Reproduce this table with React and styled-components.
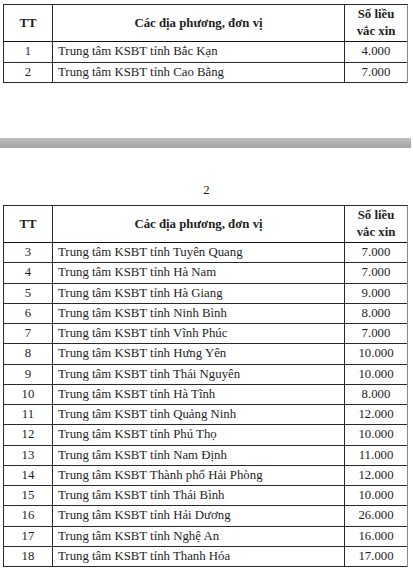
import React from "react";
import styled, { createGlobalStyle } from "styled-components";

const Global = createGlobalStyle`
  html, body { margin: 0; padding: 0; background: #fff; }
  body { font-family: "Liberation Serif", "Times New Roman", serif; color: #1e1e1e; }
`;

const Page = styled.div`
  display: flex;
  flex-direction: column;
  padding-top: 4px;
`;

const Table = styled.div`
  margin-left: 3px;
  width: 405px;
  box-sizing: border-box;
  border: 1px solid #2a2a2a;
  border-right-color: #8a8a8a;
  border-bottom: none;
`;

const Row = styled.div`
  display: grid;
  grid-template-columns: 49px 292px 62px;
  height: ${(p) => p.$h}px;
  border-bottom: 1px solid ${(p) => (p.$head ? "#111" : "#2a2a2a")};
  box-sizing: border-box;
`;

const Cell = styled.div`
  display: flex;
  align-items: center;
  justify-content: ${(p) => (p.$left ? "flex-start" : "center")};
  padding-left: ${(p) => (p.$left ? "5px" : "0")};
  border-right: ${(p) => (p.$last ? "none" : "1px solid #2a2a2a")};
  box-sizing: border-box;
  font-size: 12.8px;
  font-weight: ${(p) => (p.$bold ? 700 : 400)};
  line-height: 17px;
  text-align: center;
  white-space: nowrap;
`;

const Bar = styled.div`
  margin-top: 55px;
  width: 411px;
  height: 10px;
  background: linear-gradient(#bdbdbd, #a3a3a3);
`;

const PageNum = styled.div`
  margin-top: 34px;
  width: 413px;
  text-align: center;
  font-size: 12.8px;
  line-height: 16px;
  height: 16px;
`;

const Spacer = styled.div`
  height: ${(p) => p.$h}px;
`;

function Header() {
  return (
    <Row $h={37} $head>
      <Cell $bold>TT</Cell>
      <Cell $bold>Các địa phương, đơn vị</Cell>
      <Cell $bold $last>
        Số liều
        <br />
        vắc xin
      </Cell>
    </Row>
  );
}

function DataTable({ rows, h }) {
  return (
    <Table>
      <Header />
      {rows.map(([n, name, v]) => (
        <Row key={n} $h={h}>
          <Cell>{n}</Cell>
          <Cell $left>{name}</Cell>
          <Cell $last>{v}</Cell>
        </Row>
      ))}
    </Table>
  );
}

const rows1 = [
  [1, "Trung tâm KSBT tỉnh Bắc Kạn", "4.000"],
  [2, "Trung tâm KSBT tỉnh Cao Bằng", "7.000"],
];

const rows2 = [
  [3, "Trung tâm KSBT tỉnh Tuyên Quang", "7.000"],
  [4, "Trung tâm KSBT tỉnh Hà Nam", "7.000"],
  [5, "Trung tâm KSBT tỉnh Hà Giang", "9.000"],
  [6, "Trung tâm KSBT tỉnh Ninh Bình", "8.000"],
  [7, "Trung tâm KSBT tỉnh Vĩnh Phúc", "7.000"],
  [8, "Trung tâm KSBT tỉnh Hưng Yên", "10.000"],
  [9, "Trung tâm KSBT tỉnh Thái Nguyên", "10.000"],
  [10, "Trung tâm KSBT tỉnh Hà Tĩnh", "8.000"],
  [11, "Trung tâm KSBT tỉnh Quảng Ninh", "12.000"],
  [12, "Trung tâm KSBT tỉnh Phú Thọ", "10.000"],
  [13, "Trung tâm KSBT tỉnh Nam Định", "11.000"],
  [14, "Trung tâm KSBT Thành phố Hải Phòng", "12.000"],
  [15, "Trung tâm KSBT tỉnh Thái Bình", "10.000"],
  [16, "Trung tâm KSBT tỉnh Hải Dương", "26.000"],
  [17, "Trung tâm KSBT tỉnh Nghệ An", "16.000"],
  [18, "Trung tâm KSBT tỉnh Thanh Hóa", "17.000"],
];

export default function App() {
  return (
    <>
      <Global />
      <Page>
        <DataTable rows={rows1} h={20.5} />
        <Bar />
        <PageNum>2</PageNum>
        <Spacer $h={7} />
        <DataTable rows={rows2} h={20.25} />
      </Page>
    </>
  );
}
